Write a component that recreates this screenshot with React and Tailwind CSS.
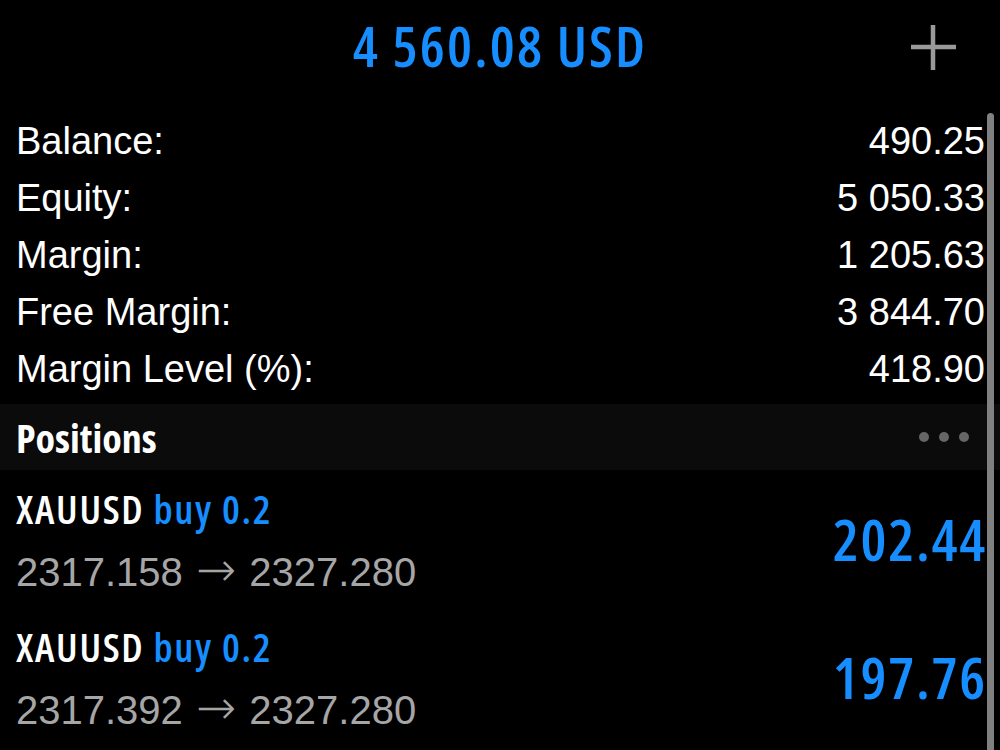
const narrow = { fontFamily: '"Open Sans", sans-serif', fontStretch: '75%' }
const sans = { fontFamily: '"Liberation Sans", Arial, sans-serif' }
const arrow = { fontFamily: '"DejaVu Sans", sans-serif', fontWeight: 200 }

const stats = [
  ['Balance:', '490.25'],
  ['Equity:', '5 050.33'],
  ['Margin:', '1 205.63'],
  ['Free Margin:', '3 844.70'],
  ['Margin Level (%):', '418.90'],
]

const positions = [
  { symbol: 'XAUUSD', side: 'buy 0.2', open: '2317.158', current: '2327.280', profit: '202.44' },
  { symbol: 'XAUUSD', side: 'buy 0.2', open: '2317.392', current: '2327.280', profit: '197.76' },
]

function PlusIcon() {
  return (
    <svg width="48" height="48" viewBox="0 0 48 48" className="text-[#9a9a9a]">
      <path d="M24 2v45M2 24h45" stroke="currentColor" strokeWidth="4.5" fill="none" />
    </svg>
  )
}

export default function App() {
  return (
    <div className="relative w-[1000px] h-[750px] overflow-hidden bg-black text-white">
      {/* header */}
      <div className="relative h-[95px] flex items-center justify-center">
        <span className="text-[56px] leading-none font-semibold tracking-[2.2px] text-[#168eff] pb-[6px]" style={narrow}>
          4 560.08 USD
        </span>
        <div className="absolute right-[43px] top-[23px]">
          <PlusIcon />
        </div>
      </div>

      {/* account summary */}
      <div className="pt-[17px] px-[16px] pr-[15px]" style={sans}>
        {stats.map(([label, value]) => (
          <div key={label} className="h-[57px] flex items-center justify-between text-[38px] leading-none">
            <span>{label}</span>
            <span>{value}</span>
          </div>
        ))}
      </div>

      {/* positions header */}
      <div className="mt-[7px] h-[66px] bg-[#0b0b0b] flex items-center justify-between pl-[16px] pr-[31px]">
        <span className="text-[40px] leading-none font-bold pt-0.5" style={narrow}>Positions</span>
        <div className="flex gap-[10px]">
          <span className="w-[10px] h-[10px] rounded-full bg-[#666]" />
          <span className="w-[10px] h-[10px] rounded-full bg-[#666]" />
          <span className="w-[10px] h-[10px] rounded-full bg-[#666]" />
        </div>
      </div>

      {/* positions list */}
      {positions.map((p, i) => (
        <div key={i} className="h-[138px] flex items-center justify-between pl-[16px] pr-[15px]">
          <div className="flex flex-col gap-[16px] pt-[3px]">
            <div className="text-[40px] leading-none font-semibold tracking-[1.7px]" style={narrow}>
              {p.symbol} <span className="text-[#168eff]">{p.side}</span>
            </div>
            <div className="text-[40px] leading-none text-[#a6a6a6] whitespace-nowrap" style={sans}>
              {p.open} <span className="text-[48px] leading-none mx-[2px]" style={arrow}>→</span> {p.current}
            </div>
          </div>
          <span className="text-[58px] leading-none font-semibold tracking-[1.8px] -mr-[2px] text-[#168eff]" style={narrow}>
            {p.profit}
          </span>
        </div>
      ))}

      {/* scroll indicator */}
      <div className="absolute right-[6px] top-[113px] bottom-0 w-[7px] rounded-t-full bg-[#808080]" />
    </div>
  )
}
